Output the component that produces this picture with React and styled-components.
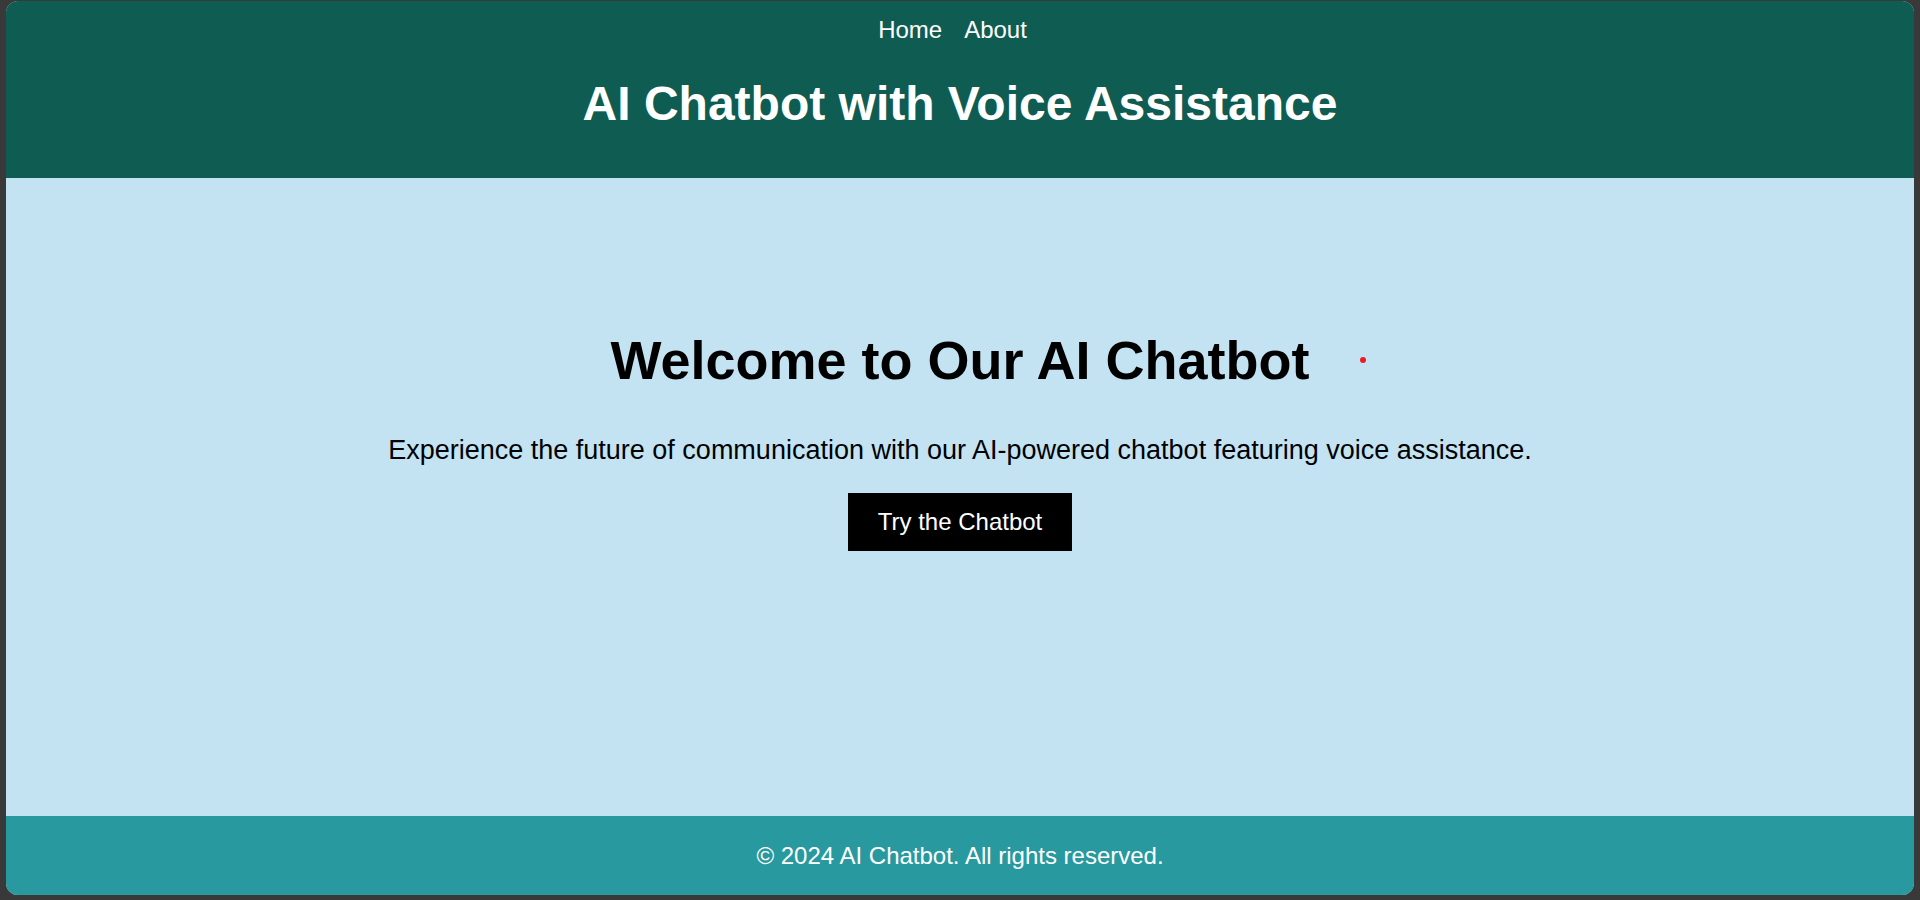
import React from 'react';
import styled, { createGlobalStyle } from 'styled-components';

const GlobalStyle = createGlobalStyle`
  html, body {
    margin: 0;
    padding: 0;
    background: #393939;
    font-family: "Liberation Sans", Arial, sans-serif;
  }
`;

const App = () => {
  return (
    <>
      <GlobalStyle />
      <PageFrame>
        <HeaderStyled>
          <NavStyled>
            <NavLink href="#home">Home</NavLink>
            <NavLink href="#about">About</NavLink>
          </NavStyled>
          <h1>AI Chatbot with Voice Assistance</h1>
        </HeaderStyled>
        <HeroSection>
          <HeroTitle>
            Welcome to Our AI Chatbot
            <CursorDot />
          </HeroTitle>
          <p>Experience the future of communication with our AI-powered chatbot featuring voice assistance.</p>
          <ButtonStyled>Try the Chatbot</ButtonStyled>
        </HeroSection>
        <FooterStyled>
          <p>&copy; 2024 AI Chatbot. All rights reserved.</p>
        </FooterStyled>
      </PageFrame>
    </>
  );
};

const PageFrame = styled.div`
  display: flex;
  flex-direction: column;
  margin: 1px 6px 0;
  height: 894px;
  border-radius: 12px;
  overflow: hidden;
  background: #c3e3f3;
`;

const HeaderStyled = styled.header`
  background: #0f5c53;
  color: #fff;
  padding: 15px 0;
  text-align: center;

  h1 {
    margin: 32px 0;
    font-size: 48px;
    font-weight: 700;
    line-height: normal;
  }
`;

const NavStyled = styled.nav`
  display: flex;
  justify-content: center;
  gap: 22px;
  padding-right: 15px;
  font-size: 24px;
  line-height: normal;
`;

const NavLink = styled.a`
  color: #fff;
  text-decoration: none;
`;

const HeroSection = styled.main`
  flex: 1;
  display: flex;
  flex-direction: column;
  align-items: center;
  padding-top: 151px;
  text-align: center;
  color: #000;

  p {
    margin: 0 0 27px;
    font-size: 27px;
    line-height: normal;
  }
`;

const HeroTitle = styled.h2`
  position: relative;
  margin: 0 0 44px;
  font-size: 54px;
  font-weight: 700;
  line-height: normal;
`;

// little red pointer mark left on the capture
const CursorDot = styled.span`
  position: absolute;
  left: calc(100% + 50px);
  top: 28px;
  width: 6px;
  height: 6px;
  border-radius: 50%;
  background: #ec1c24;
`;

const ButtonStyled = styled.button`
  background: #000;
  color: #fff;
  border: none;
  outline: none;
  padding: 15px 30px;
  font-family: inherit;
  font-size: 24px;
  line-height: normal;
  cursor: pointer;
`;

const FooterStyled = styled.footer`
  height: 79px;
  display: flex;
  align-items: center;
  justify-content: center;
  background: #27999f;
  color: #fff;

  p {
    margin: 0;
    font-size: 24px;
  }
`;

export default App;
